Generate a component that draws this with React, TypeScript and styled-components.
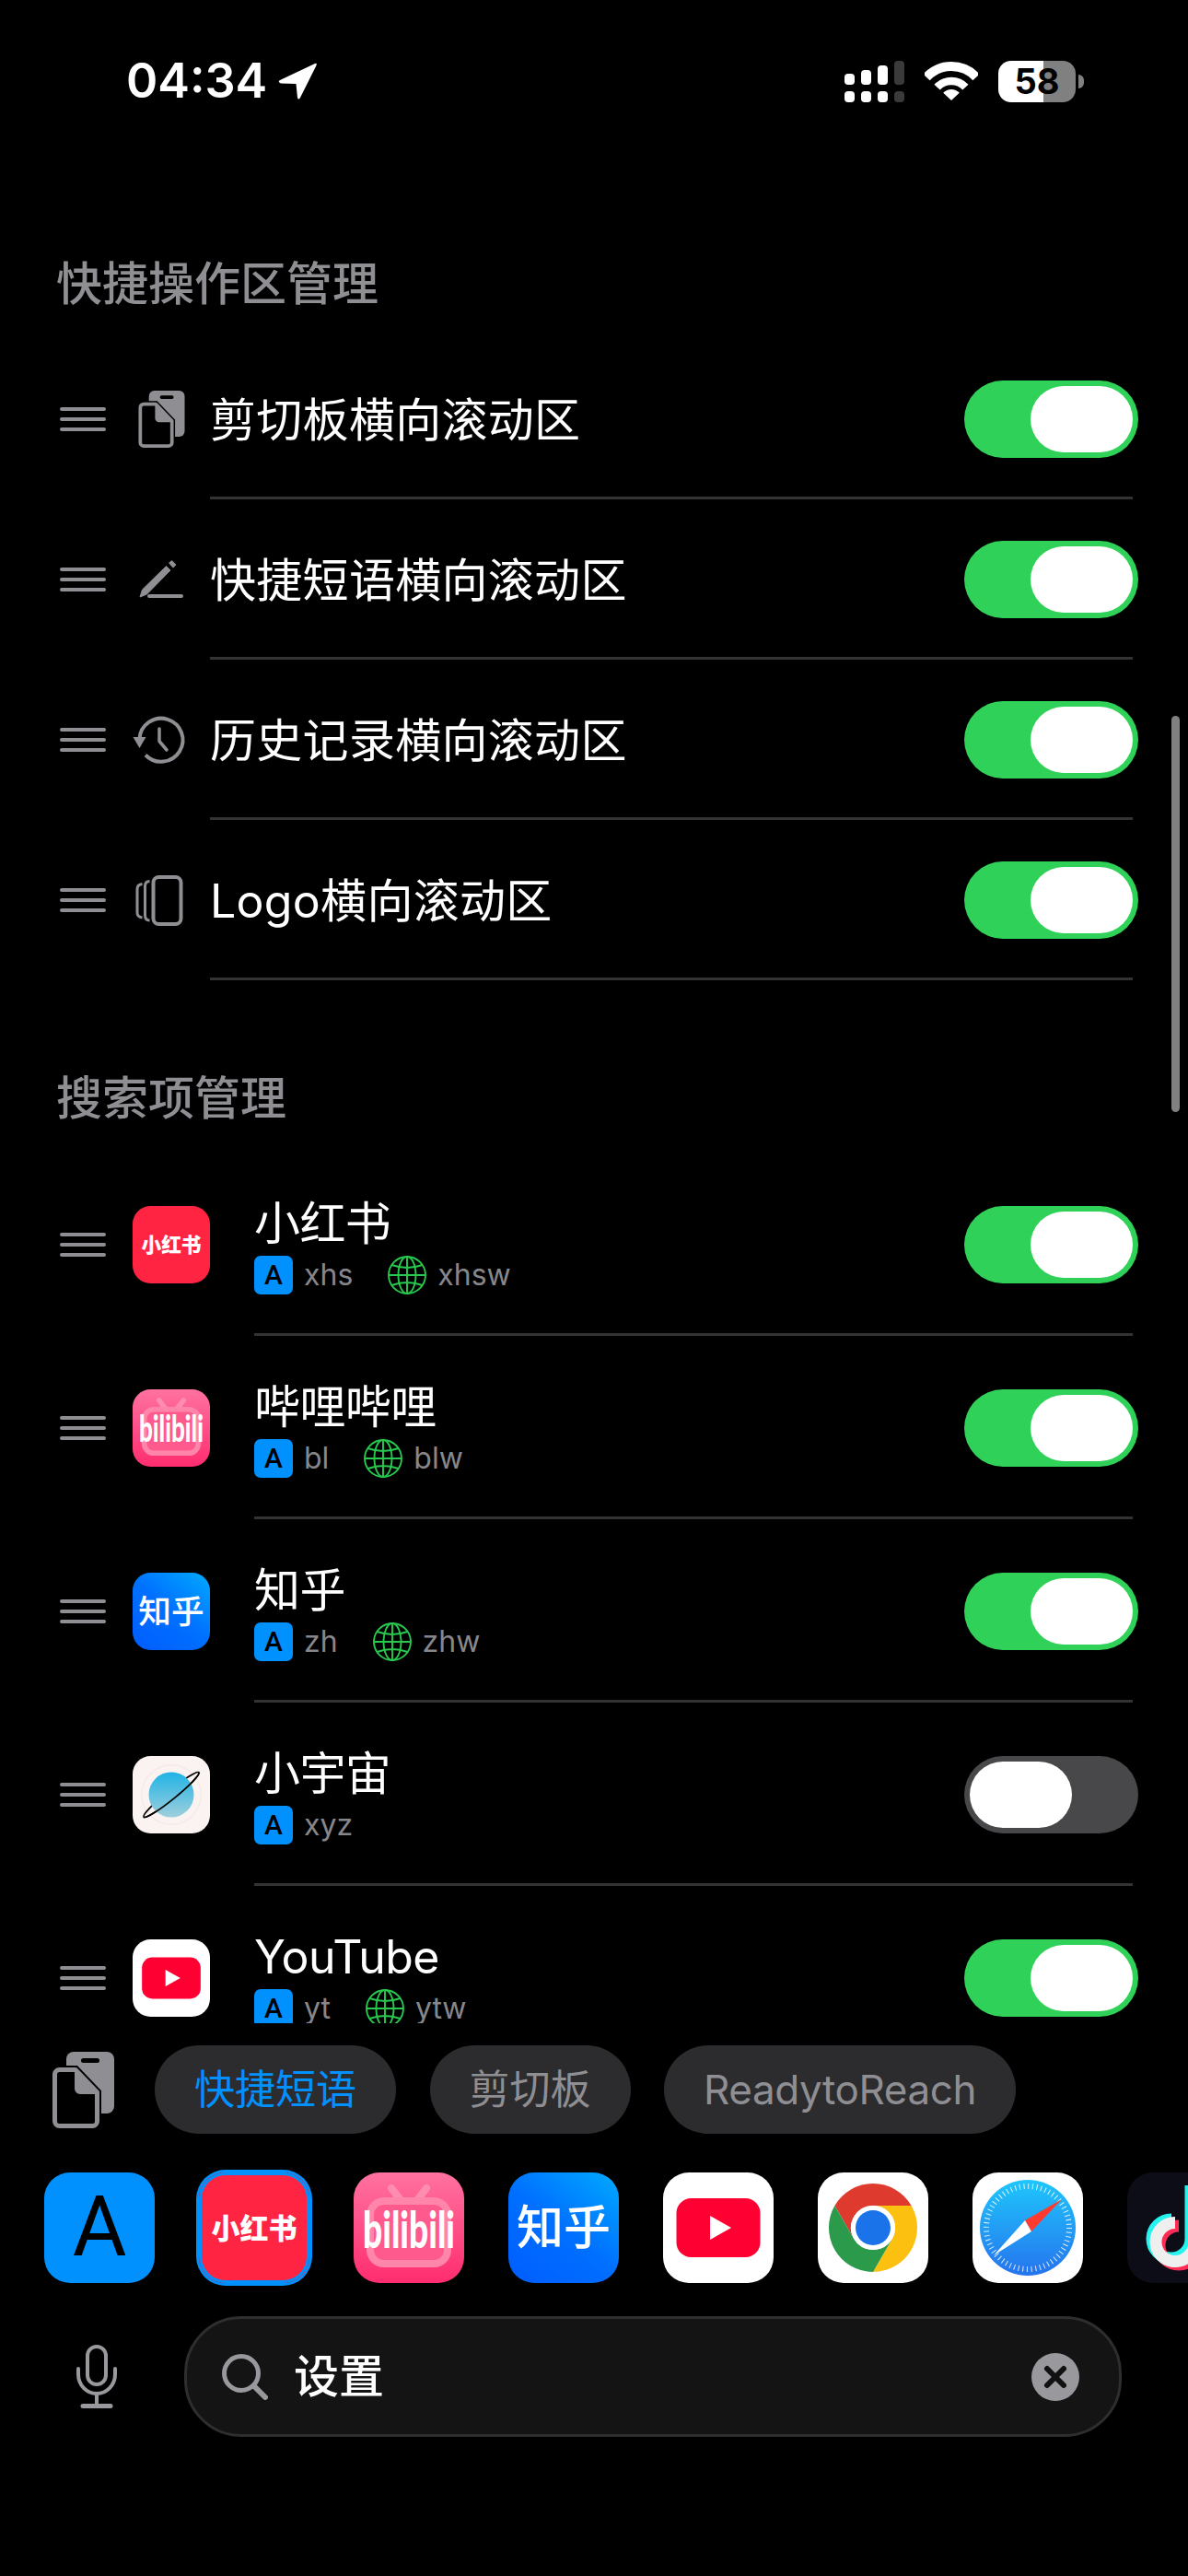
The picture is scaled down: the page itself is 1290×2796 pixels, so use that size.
import React from "react";
import styled, { createGlobalStyle } from "styled-components";

const SANS = `Inter, "Noto Sans CJK SC", "Noto Sans", sans-serif`;
const CJK = `"Noto Sans CJK SC", sans-serif`;
const GRAY = "#8e8e93";
const BLUE = "#0091ff";
const GREEN = "#30d158";

const Global = createGlobalStyle`
  html, body { margin: 0; padding: 0; background: #000; }
  * { box-sizing: border-box; }
`;

const Screen = styled.div`
  position: relative;
  width: 1290px;
  height: 2796px;
  overflow: hidden;
  background: #000;
  color: #fff;
  font-family: ${SANS};
  display: flex;
  flex-direction: column;
`;

/* status bar */
const StatusBar = styled.header`
  flex: none;
  height: 140px;
  padding: 36px 122px 0 137px;
  display: flex;
  align-items: center;
`;
const Time = styled.span`
  font-size: 52px;
  font-weight: 600;
  line-height: 60px;
`;
const LocationIcon = styled.svg`
  margin-left: 12px;
  width: 42px;
  height: 40px;
  fill: #fff;
`;
const StatusRight = styled.div`
  margin-left: auto;
  display: flex;
  align-items: center;
  gap: 22px;
`;
const Battery = styled.div`
  position: relative;
  width: 84px;
  height: 45px;
  border-radius: 14px;
  background: linear-gradient(90deg, #fff 58.5%, #808080 58.5%);
  color: #000;
  font-size: 38px;
  font-weight: 700;
  line-height: 45px;
  text-align: center;
  &::after {
    content: "";
    position: absolute;
    right: -9px;
    top: 15px;
    width: 6px;
    height: 15px;
    border-radius: 0 8px 8px 0;
    background: #808080;
  }
`;

/* scrolling list */
const Scroller = styled.main`
  position: relative;
  flex: none;
  height: 2056px;
  padding-top: 138px;
  overflow: hidden;
`;
const ScrollThumb = styled.div`
  position: absolute;
  top: 637px;
  right: 9px;
  width: 9px;
  height: 430px;
  border-radius: 5px;
  background: #808080;
`;
const SectionTitle = styled.h2<{ $gap?: number }>`
  margin: ${(p) => p.$gap ?? 0}px 0 ${(p) => (p.$gap ? 29 : 30)}px 61px;
  font-size: 50px;
  font-weight: 500;
  line-height: 60px;
  color: ${GRAY};
`;
const Row = styled.div<{ $tall?: boolean }>`
  height: ${(p) => (p.$tall ? 199 : 174)}px;
  padding: 0 60px 0 65px;
  display: flex;
  align-items: center;
`;
const Handle = styled.div`
  flex: none;
  width: 50px;
  display: flex;
  flex-direction: column;
  gap: 7px;
  & > i {
    display: block;
    height: 4px;
    border-radius: 2px;
    background: ${GRAY};
  }
`;
const IconSlot = styled.div`
  flex: none;
  width: 64px;
  height: 64px;
  margin: 0 21px 0 28px;
  display: flex;
  align-items: center;
  justify-content: center;
`;
const RowLogo = styled.div`
  flex: none;
  margin: 0 48px 0 29px;
`;
const RowBody = styled.div`
  flex: 1;
  align-self: stretch;
  display: flex;
  align-items: center;
  justify-content: space-between;
  box-shadow: inset 0 -3px 0 #333336;
`;
const RowLabel = styled.div`
  padding-top: 2px;
  font-size: 50px;
  line-height: 60px;
  font-weight: 400;
  letter-spacing: 0.3px;
`;
const AppText = styled.div`
  display: flex;
  flex-direction: column;
  gap: 5px;
`;
const AppName = styled.div`
  padding-top: 1px;
  font-size: 50px;
  line-height: 60px;
  letter-spacing: -0.6px;
`;
const AliasRow = styled.div`
  display: flex;
  align-items: center;
  height: 42px;
  gap: 38px;
`;
const Alias = styled.div`
  display: flex;
  align-items: center;
  gap: 12px;
  font-size: 32px;
  line-height: 42px;
  color: #87878b;
`;
const KeyBadge = styled.span`
  width: 42px;
  height: 42px;
  border-radius: 7px;
  background: ${BLUE};
  color: #000;
  font-family: Roboto, sans-serif;
  font-size: 30px;
  font-weight: 500;
  line-height: 42px;
  text-align: center;
`;
const Track = styled.div<{ $on: boolean }>`
  flex: none;
  width: 189px;
  height: 84px;
  margin-right: -6px;
  padding: 6px;
  border-radius: 42px;
  background: ${(p) => (p.$on ? GREEN : "#48484a")};
  display: flex;
  justify-content: ${(p) => (p.$on ? "flex-end" : "flex-start")};
`;
const Thumb = styled.div`
  width: 111px;
  height: 72px;
  border-radius: 36px;
  background: #fff;
`;

/* keyboard-side panel */
const Dock = styled.footer`
  flex: 1;
  background: #000;
  padding-top: 24px;
`;
const TabRow = styled.div`
  display: flex;
  align-items: center;
  padding-left: 57px;
`;
const Tabs = styled.div`
  margin-left: 44px;
  display: flex;
  gap: 36.5px;
`;
const Tab = styled.div<{ $active?: boolean; $latin?: boolean }>`
  height: 96px;
  padding: 0 43px;
  border-radius: 48px;
  background: #2c2c2e;
  font-size: 44px;
  line-height: 96px;
  letter-spacing: ${(p) => (p.$latin ? "-0.4px" : "0")};
  color: ${(p) => (p.$active ? BLUE : GRAY)};
`;
const TileRow = styled.div`
  margin-top: 42px;
  padding-left: 48px;
  display: flex;
  gap: 48px;
`;
const Tile = styled.div<{ $size: number; $selected?: boolean }>`
  position: relative;
  flex: none;
  width: ${(p) => p.$size}px;
  height: ${(p) => p.$size}px;
  border-radius: ${(p) => p.$size * 0.24}px;
  ${(p) => (p.$selected ? `box-shadow: 0 0 0 3px ${BLUE};` : "")}
  & > svg {
    display: block;
    width: 100%;
    height: 100%;
  }
  ${(p) =>
    p.$selected
      ? `&::after {
          content: "";
          position: absolute;
          inset: 0;
          border-radius: inherit;
          box-shadow: inset 0 0 0 3px ${BLUE};
        }`
      : ""}
`;
const KeyTile = styled.div`
  flex: none;
  width: 120px;
  height: 120px;
  border-radius: 28px;
  background: ${BLUE};
  color: #000;
  font-family: Roboto, sans-serif;
  font-size: 90px;
  font-weight: 400;
  line-height: 120px;
  text-align: center;
`;
const SearchRow = styled.div`
  margin-top: 36px;
  padding-left: 82px;
  display: flex;
  align-items: center;
  gap: 72px;
`;
const SearchField = styled.div`
  width: 1018px;
  height: 131px;
  padding: 0 43px 0 38px;
  border: 3px solid #2e2e30;
  border-radius: 62px;
  background: #141414;
  display: flex;
  align-items: center;
  gap: 28px;
`;
const SearchText = styled.span`
  flex: 1;
  font-size: 49px;
  font-weight: 500;
  line-height: 60px;
`;
const LogoLabel = styled.text<{ $size: number; $family?: string; $weight?: number }>`
  font-family: ${(p) => p.$family ?? CJK};
  font-size: ${(p) => p.$size}px;
  font-weight: ${(p) => p.$weight ?? 900};
  fill: #fff;
  text-anchor: middle;
`;

/* drawings */
const DOC = "M7.5 19.5H25L48.5 44V75.5a5 5 0 0 1-5 5H7.5a5 5 0 0 1-5-5V24.5a5 5 0 0 1 5-5Z";
const Clipboard = ({ w, h }: { w: number; h: number }) => (
  <svg width={w} height={h} viewBox="0 0 67 83" style={{ flex: "none" }}>
    <rect x="15" y="0" width="52" height="67" rx="8" fill={GRAY} />
    <rect x="31" y="7" width="20" height="5" rx="2.5" fill="#000" />
    <path d={DOC} fill="#000" stroke="#000" strokeWidth="9" />
    <path d={DOC} fill="#000" stroke={GRAY} strokeWidth="5" strokeLinejoin="round" />
    <path d="M26 21L47 44H30a4 4 0 0 1-4-4Z" fill={GRAY} stroke={GRAY} strokeWidth="4" strokeLinejoin="round" />
  </svg>
);
const PenIcon = () => (
  <svg width="64" height="64" viewBox="0 0 64 64" fill="none" stroke={GRAY}>
    <path d="M9 51L11.5 43L37.5 17.5L42 22L16.5 48Z" fill={GRAY} strokeWidth="1" strokeLinejoin="round" />
    <path d="M41 14L43.5 12L47.5 16L45 18.5Z" fill={GRAY} strokeWidth="1.5" strokeLinejoin="round" />
    <path d="M19 50H54" strokeWidth="4" strokeLinecap="round" />
  </svg>
);
const HistoryIcon = () => (
  <svg width="64" height="64" viewBox="0 0 64 64" fill="none" stroke={GRAY} strokeWidth="4">
    <path d="M8.5 31A23.5 23.5 0 1 1 15 48.5" />
    <path d="M1.5 29H15.5L8.5 41Z" fill={GRAY} stroke="none" />
    <path d="M30 20V33.5L38 43" strokeWidth="3.5" strokeLinecap="round" strokeLinejoin="round" />
  </svg>
);
const StackIcon = () => (
  <svg width="64" height="64" viewBox="1 0 64 64" fill="none" stroke={GRAY}>
    <rect x="24.5" y="7" width="30" height="51" rx="6" strokeWidth="4" />
    <path d="M20.5 11.5Q15.5 11.5 15.5 17V48.5Q15.5 54 20.5 54" strokeWidth="3" />
    <path d="M12.5 14.5Q7 15 7 20V45.5Q7 50.5 12.5 51" strokeWidth="3" />
  </svg>
);
const GlobeIcon = () => (
  <svg width="42" height="42" viewBox="0 0 42 42" fill="none" stroke="#27c94f" strokeWidth="1.9" style={{ flex: "none" }}>
    <circle cx="21" cy="21" r="20" />
    <ellipse cx="21" cy="21" rx="9.5" ry="20" />
    <path d="M21 1V41M1 21H41M4.5 10Q21 16 37.5 10M4.5 32Q21 26 37.5 32" />
  </svg>
);
const MicIcon = () => (
  <svg width="46" height="69" viewBox="0 0 46 69" fill="none" stroke="#98989d" style={{ flex: "none" }}>
    <rect x="13" y="2" width="20" height="41" rx="10" strokeWidth="4" />
    <path d="M3 26V32A20 21 0 0 0 43 32V26" strokeWidth="4" strokeLinecap="round" />
    <path d="M23 53V65" strokeWidth="4" />
    <path d="M8 66.5H38" strokeWidth="5" strokeLinecap="round" />
  </svg>
);
const SearchIcon = () => (
  <svg width="50" height="50" viewBox="0 0 50 50" fill="none" stroke="#98989d" strokeWidth="5" style={{ flex: "none" }}>
    <circle cx="21" cy="21" r="18.5" />
    <path d="M34.5 34.5L47 47" strokeWidth="6" strokeLinecap="round" />
  </svg>
);
const ClearIcon = () => (
  <svg width="52" height="52" viewBox="0 0 52 52" style={{ flex: "none" }}>
    <circle cx="26" cy="26" r="26" fill="#98989d" />
    <path d="M17 17L35 35M35 17L17 35" stroke="#111" strokeWidth="6" strokeLinecap="round" />
  </svg>
);
const Signal = () => (
  <svg width="65" height="45" viewBox="0 0 65 45" style={{ flex: "none" }}>
    <rect x="0" y="14" width="11" height="12" rx="4" fill="#fff" />
    <rect x="18" y="10" width="11" height="16" rx="4" fill="#fff" />
    <rect x="36" y="5" width="11" height="21" rx="4" fill="#fff" />
    <rect x="54" y="0" width="11" height="26" rx="4" fill="#3a3a3a" />
    <rect x="0" y="33" width="11" height="12" rx="4" fill="#fff" />
    <rect x="18" y="33" width="11" height="12" rx="4" fill="#fff" />
    <rect x="36" y="33" width="11" height="12" rx="4" fill="#fff" />
    <rect x="54" y="33" width="11" height="12" rx="4" fill="#3a3a3a" />
  </svg>
);
const Wifi = () => (
  <svg width="58" height="42" viewBox="0 0 58 42" fill="none" stroke="#fff" style={{ flex: "none" }}>
    <path d="M2 16.8A37 37 0 0 1 56 16.8" strokeWidth="10" />
    <path d="M13.6 27.7A21 21 0 0 1 44.4 27.7" strokeWidth="8.5" />
    <path d="M29 42L20.2 33.8A12 12 0 0 1 37.8 33.8Z" fill="#fff" stroke="none" />
  </svg>
);

type LogoName = "xhs" | "bili" | "zhihu" | "cosmos" | "youtube" | "chrome" | "safari" | "tiktok";

const LOGO_RX = 28;
const Logo = ({ name }: { name: LogoName }) => {
  switch (name) {
    case "xhs":
      return (
        <svg viewBox="0 0 120 120">
          <rect width="120" height="120" rx={LOGO_RX} fill="#ff2442" />
          <LogoLabel x="60" y="72" $size={31}>小红书</LogoLabel>
        </svg>
      );
    case "bili":
      return (
        <svg viewBox="0 0 120 120">
          <defs>
            <linearGradient id="biliBg" x1="0" y1="0" x2="0" y2="1">
              <stop offset="0" stopColor="#ff72a0" />
              <stop offset="1" stopColor="#ff2d70" />
            </linearGradient>
          </defs>
          <rect width="120" height="120" rx={LOGO_RX} fill="url(#biliBg)" />
          <path d="M41 17L51 30M79 17L69 30" stroke="#ff8db0" strokeWidth="8" strokeLinecap="round" />
          <rect x="18" y="31" width="84" height="68" rx="15" fill="#ff5a8e" stroke="#ff85ab" strokeWidth="8" />
          <LogoLabel x="60" y="82" $size={56} $family={`Lato, sans-serif`} textLength={100} lengthAdjust="spacingAndGlyphs">bilibili</LogoLabel>
        </svg>
      );
    case "zhihu":
      return (
        <svg viewBox="0 0 120 120">
          <defs>
            <linearGradient id="zhihuBg" x1="1" y1="0" x2="0.2" y2="1">
              <stop offset="0" stopColor="#00aaff" />
              <stop offset="0.55" stopColor="#0070ff" />
              <stop offset="1" stopColor="#0060ff" />
            </linearGradient>
          </defs>
          <rect width="120" height="120" rx={LOGO_RX} fill="url(#zhihuBg)" />
          <LogoLabel x="60" y="78" $size={51} $weight={500}>知乎</LogoLabel>
        </svg>
      );
    case "cosmos":
      return (
        <svg viewBox="0 0 120 120">
          <defs>
            <linearGradient id="cosmosBall" x1="0" y1="0" x2="0" y2="1">
              <stop offset="0" stopColor="#1fb3e6" />
              <stop offset="1" stopColor="#9fcfdc" />
            </linearGradient>
          </defs>
          <rect width="120" height="120" rx={LOGO_RX} fill="#faf3f1" />
          <circle cx="60" cy="60" r="46" fill="none" stroke="#f6e9e6" strokeWidth="2" />
          <g transform="rotate(-39 60 60)" fill="none" stroke="#000" strokeWidth="2.5">
            <ellipse cx="60" cy="60" rx="55" ry="7" />
            <circle cx="60" cy="60" r="35" fill="url(#cosmosBall)" stroke="none" transform="rotate(39 60 60)" />
            <path d="M5 60A55 7 0 0 0 115 60" />
          </g>
        </svg>
      );
    case "youtube":
      return (
        <svg viewBox="0 0 120 120">
          <rect width="120" height="120" rx={LOGO_RX} fill="#fff" />
          <rect x="14.5" y="28" width="91" height="64" rx="16" fill="#ff0033" />
          <path d="M51 47L74 60L51 73Z" fill="#fff" />
        </svg>
      );
    case "chrome":
      return (
        <svg viewBox="0 0 120 120">
          <rect width="120" height="120" rx={LOGO_RX} fill="#fff" />
          <path d="M60 36H101.57A48 48 0 0 0 18.43 36L39.2 72A24 24 0 0 1 60 36Z" fill="#de3a2d" />
          <path d="M60 36H101.57A48 48 0 0 1 60 108L80.78 72A24 24 0 0 0 60 36Z" fill="#fcc010" />
          <path d="M39.2 72L18.43 36A48 48 0 0 0 60 108L80.78 72A24 24 0 0 1 39.2 72Z" fill="#2b9a4a" />
          <circle cx="60" cy="60" r="24" fill="#fff" />
          <circle cx="60" cy="60" r="19" fill="#1a73e8" />
        </svg>
      );
    case "safari":
      return (
        <svg viewBox="0 0 120 120">
          <defs>
            <linearGradient id="safariBg" x1="0" y1="0" x2="0" y2="1">
              <stop offset="0" stopColor="#1fc6fb" />
              <stop offset="1" stopColor="#2574ee" />
            </linearGradient>
          </defs>
          <rect width="120" height="120" rx={LOGO_RX} fill="#fff" />
          <circle cx="60" cy="60" r="52" fill="url(#safariBg)" />
          <circle cx="60" cy="60" r="45" fill="none" stroke="#fff" strokeOpacity="0.85" strokeWidth="6" strokeDasharray="1 3.71" />
          <path d="M97 29L64 64L57 52Z" fill="#ff3b30" />
          <path d="M23 90L57 52L64 64Z" fill="#fff" />
        </svg>
      );
    case "tiktok":
      return (
        <svg viewBox="0 0 120 120" fill="none">
          <rect width="120" height="120" rx={LOGO_RX} fill="#0d0d17" />
          <path d="M48 51A21 21 0 1 0 69 72V14" stroke="#25f4ee" strokeWidth="13" />
          <path d="M56 58A21 21 0 1 0 77 79V21" stroke="#fe2c55" strokeWidth="13" />
          <path d="M52 54.5A21 21 0 1 0 73 75.5V18" stroke="#efefef" strokeWidth="13" />
        </svg>
      );
  }
};

/* data */
const QUICK = [
  { label: "剪切板横向滚动区", icon: <Clipboard w={51} h={62} /> },
  { label: "快捷短语横向滚动区", icon: <PenIcon /> },
  { label: "历史记录横向滚动区", icon: <HistoryIcon /> },
  { label: "Logo横向滚动区", icon: <StackIcon /> },
];

const APPS: { name: string; logo: LogoName; key: string; web?: string; on: boolean }[] = [
  { name: "小红书", logo: "xhs", key: "xhs", web: "xhsw", on: true },
  { name: "哔哩哔哩", logo: "bili", key: "bl", web: "blw", on: true },
  { name: "知乎", logo: "zhihu", key: "zh", web: "zhw", on: true },
  { name: "小宇宙", logo: "cosmos", key: "xyz", on: false },
  { name: "YouTube", logo: "youtube", key: "yt", web: "ytw", on: true },
];

const DOCK_LOGOS: LogoName[] = ["xhs", "bili", "zhihu", "youtube", "chrome", "safari", "tiktok"];

const DragHandle = () => (
  <Handle>
    <i />
    <i />
    <i />
  </Handle>
);
const Toggle = ({ on }: { on: boolean }) => (
  <Track $on={on}>
    <Thumb />
  </Track>
);

export default function App() {
  return (
    <Screen>
      <Global />
      <StatusBar>
        <Time>04:34</Time>
        <LocationIcon viewBox="0 0 42 40">
          <path d="M40 1L2 19Q-1 21 3 22.5L19.5 23L21 38Q22 41 24 38L41.5 3Q42.5 0 40 1Z" />
        </LocationIcon>
        <StatusRight>
          <Signal />
          <Wifi />
          <Battery>58</Battery>
        </StatusRight>
      </StatusBar>

      <Scroller>
        <SectionTitle>快捷操作区管理</SectionTitle>
        {QUICK.map((q) => (
          <Row key={q.label}>
            <DragHandle />
            <IconSlot>{q.icon}</IconSlot>
            <RowBody>
              <RowLabel>{q.label}</RowLabel>
              <Toggle on />
            </RowBody>
          </Row>
        ))}

        <SectionTitle $gap={98}>搜索项管理</SectionTitle>
        {APPS.map((a) => (
          <Row $tall key={a.name}>
            <DragHandle />
            <RowLogo>
              <Tile $size={84}>
                <Logo name={a.logo} />
              </Tile>
            </RowLogo>
            <RowBody>
              <AppText>
                <AppName>{a.name}</AppName>
                <AliasRow>
                  <Alias>
                    <KeyBadge>A</KeyBadge>
                    {a.key}
                  </Alias>
                  {a.web && (
                    <Alias>
                      <GlobeIcon />
                      {a.web}
                    </Alias>
                  )}
                </AliasRow>
              </AppText>
              <Toggle on={a.on} />
            </RowBody>
          </Row>
        ))}
        <ScrollThumb />
      </Scroller>

      <Dock>
        <TabRow>
          <Clipboard w={67} h={83} />
          <Tabs>
            <Tab $active>快捷短语</Tab>
            <Tab>剪切板</Tab>
            <Tab $latin>ReadytoReach</Tab>
          </Tabs>
        </TabRow>
        <TileRow>
          <KeyTile>A</KeyTile>
          {DOCK_LOGOS.map((l, i) => (
            <Tile $size={120} $selected={i === 0} key={l}>
              <Logo name={l} />
            </Tile>
          ))}
        </TileRow>
        <SearchRow>
          <MicIcon />
          <SearchField>
            <SearchIcon />
            <SearchText>设置</SearchText>
            <ClearIcon />
          </SearchField>
        </SearchRow>
      </Dock>
    </Screen>
  );
}
